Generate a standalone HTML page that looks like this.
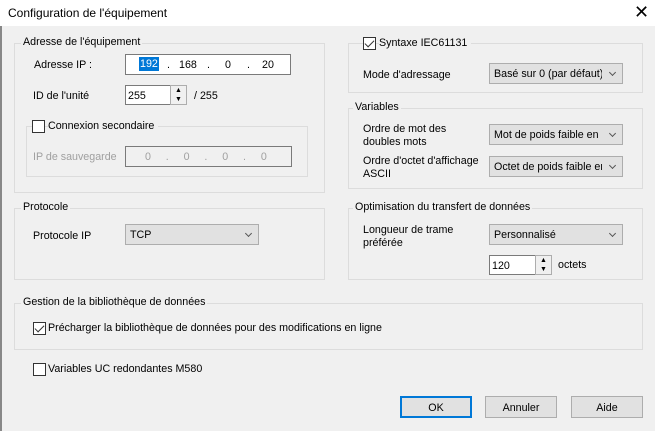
<!DOCTYPE html>
<html><head><meta charset="utf-8"><style>
*{box-sizing:border-box;margin:0;padding:0}
body{width:655px;height:431px;overflow:hidden;background:#f0f0f0;font-family:"Liberation Sans",sans-serif;font-size:10.7px;color:#000;position:relative}
.a{position:absolute;white-space:nowrap}
.title{left:0;top:0;width:655px;height:26px;background:#fff}
.grp{position:absolute;border:1px solid #dcdcdc}
.lbl{position:absolute;background:#f0f0f0;padding:0 2px;top:-8px;left:6px;white-space:nowrap}
.inp{position:absolute;background:#fff;border:1px solid #7a7a7a}
.sel{position:absolute;background:#e1e1e1;border:1px solid #adadad;padding:4px 0 0 4px;white-space:nowrap;overflow:hidden}
.sel:after{content:"";position:absolute;right:7px;top:6px;width:4px;height:4px;border-right:1px solid #555;border-bottom:1px solid #555;transform:rotate(45deg)}
.sel span{display:block;width:calc(100% - 20px);overflow:hidden}
.cb{position:absolute;width:13px;height:13px;border:1px solid #333;background:#fff}
.cb.c:after{content:"";position:absolute;left:3px;top:0px;width:4px;height:8px;border-right:1.5px solid #333;border-bottom:1.5px solid #333;transform:rotate(45deg)}
.spin{position:absolute;width:17px;background:#f0f0f0;border:1px solid #adadad}
.btn{position:absolute;background:#e1e1e1;border:1px solid #adadad;text-align:center;padding-top:5px;height:22px}
.gray{color:#a0a0a0}
</style></head><body>
<div class="a title"></div>
<div class="a" style="left:0;top:26px;width:2px;height:405px;background:#888"></div>
<div class="a" style="left:8px;top:6px;font-size:12px">Configuration de l'équipement</div>
<div class="a" style="left:634px;top:2px;font-size:18px;font-weight:300">✕</div>

<div class="grp" style="left:14px;top:43px;width:311px;height:150px"><div class="lbl" style="left:6px">Adresse de l'équipement</div></div>
<div class="a" style="left:34px;top:59px">Adresse IP :</div>
<div class="inp" style="left:125px;top:54px;width:166px;height:21px"></div>
<div class="a" style="left:139px;top:57px;background:#0078d7;color:#fff;padding:1px 1px">192</div>
<div class="a" style="left:167px;top:59px">.</div><div class="a" style="left:179px;top:59px">168</div>
<div class="a" style="left:207px;top:59px">.</div><div class="a" style="left:225px;top:59px">0</div>
<div class="a" style="left:247px;top:59px">.</div><div class="a" style="left:262px;top:59px">20</div>
<div class="a" style="left:33px;top:90px">ID de l'unité</div>
<div class="inp" style="left:125px;top:85px;width:47px;height:20px;padding:4px 0 0 2px">255</div>
<div class="spin" style="left:170px;top:85px;height:20px;font-size:7px;line-height:9px;text-align:center">▲<br>▼</div>
<div class="a" style="left:194px;top:90px">/ 255</div>
<div class="grp" style="left:26px;top:126px;width:282px;height:51px"></div>
<div class="cb" style="left:32px;top:120px"></div>
<div class="a" style="left:48px;top:120px;background:#f0f0f0;padding-right:4px">Connexion secondaire</div>
<div class="a gray" style="left:33px;top:151px">IP de sauvegarde</div>
<div class="a" style="left:125px;top:146px;width:167px;height:21px;border:1px solid #7a7a7a;background:#f0f0f0"></div>
<div class="a gray" style="left:145px;top:151px">0&nbsp;&nbsp;&nbsp;&nbsp;&nbsp;.&nbsp;&nbsp;&nbsp;&nbsp;&nbsp;0&nbsp;&nbsp;&nbsp;&nbsp;&nbsp;.&nbsp;&nbsp;&nbsp;&nbsp;&nbsp;0&nbsp;&nbsp;&nbsp;&nbsp;&nbsp;.&nbsp;&nbsp;&nbsp;&nbsp;&nbsp;0</div>

<div class="grp" style="left:14px;top:208px;width:311px;height:72px"><div class="lbl">Protocole</div></div>
<div class="a" style="left:33px;top:230px">Protocole IP</div>
<div class="sel" style="left:125px;top:224px;width:134px;height:21px"><span>TCP</span></div>

<div class="grp" style="left:348px;top:43px;width:295px;height:50px"></div>
<div class="cb c" style="left:363px;top:37px"></div>
<div class="a" style="left:379px;top:37px;background:#f0f0f0;padding-right:4px">Syntaxe IEC61131</div>
<div class="a" style="left:363px;top:69px">Mode d'adressage</div>
<div class="sel" style="left:489px;top:63px;width:134px;height:21px"><span>Basé sur 0 (par défaut)</span></div>

<div class="grp" style="left:348px;top:108px;width:295px;height:81px"><div class="lbl" style="left:4px">Variables</div></div>
<div class="a" style="left:363px;top:123px;line-height:13px">Ordre de mot des<br>doubles mots</div>
<div class="sel" style="left:489px;top:124px;width:134px;height:21px"><span>Mot de poids faible en poids fort</span></div>
<div class="a" style="left:363px;top:155px;line-height:13px">Ordre d'octet d'affichage<br>ASCII</div>
<div class="sel" style="left:489px;top:156px;width:134px;height:21px"><span>Octet de poids faible en premier</span></div>

<div class="grp" style="left:348px;top:208px;width:295px;height:72px"><div class="lbl" style="left:4px">Optimisation du transfert de données</div></div>
<div class="a" style="left:363px;top:224px;line-height:13px">Longueur de trame<br>préférée</div>
<div class="sel" style="left:489px;top:224px;width:134px;height:21px"><span>Personnalisé</span></div>
<div class="inp" style="left:489px;top:255px;width:48px;height:20px;padding:4px 0 0 2px">120</div>
<div class="spin" style="left:535px;top:255px;height:20px;font-size:7px;line-height:9px;text-align:center">▲<br>▼</div>
<div class="a" style="left:558px;top:259px">octets</div>

<div class="grp" style="left:14px;top:303px;width:629px;height:47px"><div class="lbl" style="left:6px">Gestion de la bibliothèque de données</div></div>
<div class="cb c" style="left:33px;top:322px"></div>
<div class="a" style="left:48px;top:322px">Précharger la bibliothèque de données pour des modifications en ligne</div>
<div class="cb" style="left:33px;top:363px"></div>
<div class="a" style="left:48px;top:363px">Variables UC redondantes M580</div>

<div class="btn" style="left:400px;top:396px;width:72px;border:2px solid #0078d7;padding-top:4px">OK</div>
<div class="btn" style="left:485px;top:396px;width:72px">Annuler</div>
<div class="btn" style="left:571px;top:396px;width:72px">Aide</div>
</body></html>
